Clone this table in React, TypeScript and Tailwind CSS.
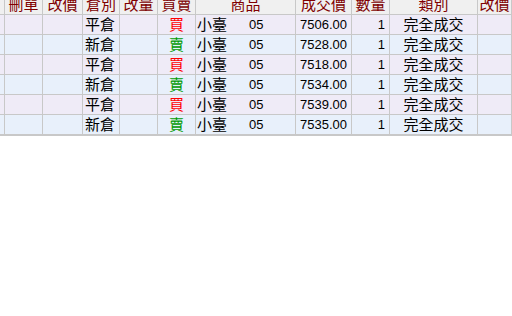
const cols = "grid-cols-[5px_38px_40px_37px_38px_38px_100px_56px_38px_88px_1fr]";

const headers = ["", "刪單", "改價", "倉別", "改量", "買賣", "商品", "成交價", "數量", "類別", "改價"];

const rows = [
  { pos: "平倉", side: "買", price: "7506.00" },
  { pos: "新倉", side: "賣", price: "7528.00" },
  { pos: "平倉", side: "買", price: "7518.00" },
  { pos: "新倉", side: "賣", price: "7534.00" },
  { pos: "平倉", side: "買", price: "7539.00" },
  { pos: "新倉", side: "賣", price: "7535.00" },
];

const cell = "border-r border-b border-[#c8c8c8] h-[20px] flex items-center overflow-hidden whitespace-nowrap";
const cjk = "text-[15px] leading-[20px]";

export default function App() {
  return (
    <div
      className="w-[512px] h-[316px] bg-white overflow-hidden text-[13px] text-black"
      style={{ fontFamily: '"Liberation Sans", "Noto Sans CJK TC", sans-serif' }}
    >
      {/* header, scrolled partly out of view */}
      <div className={`grid ${cols} bg-[#f0f0f0]`}>
        {headers.map((h, i) => (
          <div
            key={i}
            className="border-r border-b border-[#c8c8c8] h-[15px] flex items-end justify-center overflow-hidden text-[#800000] text-[15px] leading-[15px]"
          >
            <span className="mb-[2px]">{h}</span>
          </div>
        ))}
      </div>

      {rows.map((r, i) => (
        <div key={i} className={`grid ${cols} ${i % 2 === 0 ? "bg-[#efebf7]" : "bg-[#e8f0fb]"}`}>
          <div className={cell} />
          <div className={cell} />
          <div className={cell} />
          <div className={`${cell} ${cjk} pl-[2px]`}>{r.pos}</div>
          <div className={cell} />
          <div className={`${cell} ${cjk} justify-center ${r.side === "買" ? "text-[#ff0000]" : "text-[#009a00]"}`}>
            {r.side}
          </div>
          <div className={`${cell} pl-[1px]`}>
            <span className={`w-[52px] ${cjk}`}>小臺</span>
            <span>05</span>
          </div>
          <div className={`${cell} justify-end pr-[4px]`}>{r.price}</div>
          <div className={`${cell} justify-end pr-[4px]`}>1</div>
          <div className={`${cell} ${cjk} justify-center`}>完全成交</div>
          <div className={cell} />
        </div>
      ))}
      <div className="h-[2px] bg-[#c8c8c8] -mt-[1px]" />
    </div>
  );
}
